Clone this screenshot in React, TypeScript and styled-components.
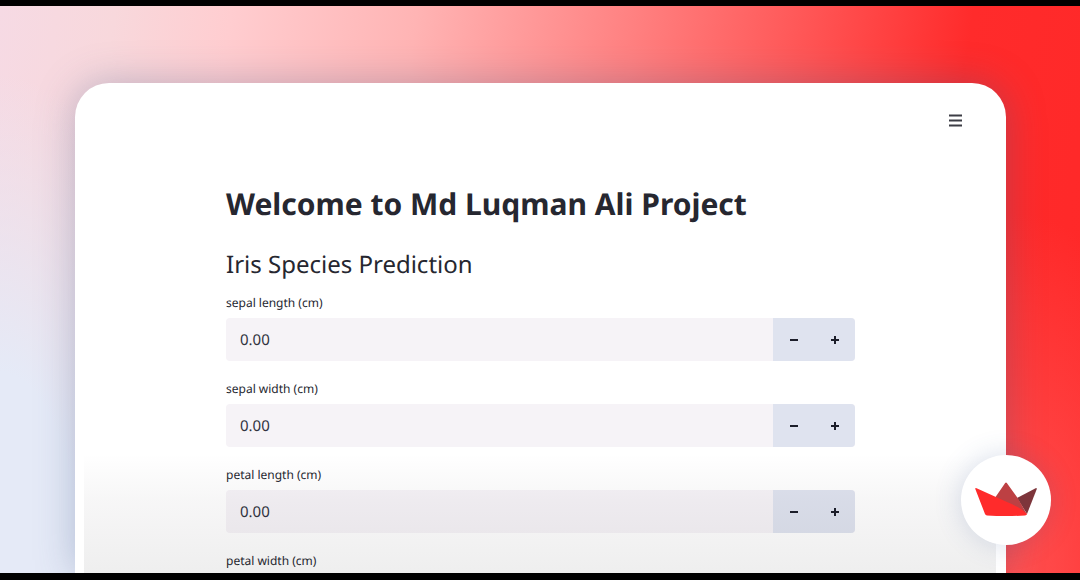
import React, { useState } from "react";
import styled, { createGlobalStyle } from "styled-components";

const GlobalStyle = createGlobalStyle`
  *, *::before, *::after { box-sizing: border-box; }
  body {
    margin: 0;
    background: #000;
    color: #262730;
    font-family: "Noto Sans", sans-serif;
    text-rendering: geometricPrecision;
  }
`;

const Stage = styled.div`
  position: relative;
  display: flex;
  height: 100vh;
  padding: 77px 74px 0 75px;
  border-top: 6px solid #000;
  border-bottom: 7px solid #000;
  overflow: hidden;
  background:
    radial-gradient(ellipse 200px 500px at 0% 100%, #e5eaf7 40%, rgba(229, 234, 247, 0) 100%),
    radial-gradient(ellipse 180px 360px at 94% 100%, rgba(255, 84, 84, 0.9), rgba(255, 84, 84, 0) 100%),
    linear-gradient(98deg, #f6dae4 0%, #f8d8dc 10%, #ffcdd0 20%, #ffb4b4 36%, #ff8080 55%, #ff5555 70%, #ff2b2b 84%, #ff2828 100%);
`;

const Card = styled.main`
  position: relative;
  flex: 1;
  min-width: 0;
  background: #fff;
  border-radius: 34px 34px 0 0;
  box-shadow: 0 0 38px rgba(70, 95, 140, 0.34);

  &::after {
    content: "";
    position: absolute;
    inset: auto 10px 0 9px;
    height: 120px;
    background: linear-gradient(rgba(20, 10, 20, 0), rgba(20, 10, 20, 0.035) 40%, rgba(20, 20, 20, 0.07));
    pointer-events: none;
  }
`;

const Toolbar = styled.header`
  display: flex;
  justify-content: flex-end;
  padding: 28px 41px 0 0;
`;

const MenuButton = styled.button`
  display: flex;
  padding: 3px;
  border: 0;
  background: none;
  color: #3c3d45;
  cursor: pointer;
`;

const Content = styled.div`
  padding: 54px 151px 0;
`;

const Title = styled.h1`
  margin: 0;
  font-size: 30px;
  font-weight: 700;
  line-height: 40px;
  white-space: nowrap;
`;

const Subtitle = styled.h2`
  margin: 25px 0 13px;
  font-size: 24px;
  font-weight: 400;
  line-height: 32px;
`;

const Form = styled.form`
  display: flex;
  flex-direction: column;
  gap: 19px;
`;

const Field = styled.div`
  display: flex;
  flex-direction: column;
  gap: 6px;
`;

const Label = styled.label`
  font-size: 12px;
  line-height: 18px;
`;

const Control = styled.div`
  display: flex;
  height: 43px;
  border-radius: 4px;
  overflow: hidden;
  background: #f6f3f7;
`;

const NumberInput = styled.input`
  flex: 1;
  min-width: 0;
  padding: 0 14px;
  border: 0;
  outline: 0;
  background: transparent;
  color: #31333f;
  font: 400 15px "Noto Sans", sans-serif;
  text-rendering: inherit;
`;

const StepButton = styled.button`
  display: flex;
  align-items: center;
  justify-content: center;
  width: 41px;
  padding: 0;
  border: 0;
  background: #dfe3ef;
  color: #1c1e2a;
  cursor: pointer;
`;

const Badge = styled.a`
  position: absolute;
  right: 29px;
  bottom: 28px;
  display: block;
  width: 90px;
  height: 90px;
  border-radius: 50%;
  background: #fff;
  box-shadow: 0 0 28px rgba(60, 90, 150, 0.2);
`;

const fields = ["sepal length (cm)", "sepal width (cm)", "petal length (cm)", "petal width (cm)"];

function NumberField({ label }: { label: string }) {
  const [value, setValue] = useState("0.00");
  const id = label.replace(/[^a-z]+/g, "-");
  const step = (delta: number) =>
    setValue((current) => ((Number(current) || 0) + delta).toFixed(2));

  return (
    <Field>
      <Label htmlFor={id}>{label}</Label>
      <Control>
        <NumberInput
          id={id}
          inputMode="decimal"
          value={value}
          onChange={(event) => setValue(event.target.value)}
        />
        <StepButton type="button" aria-label={`Decrease ${label}`} onClick={() => step(-0.01)}>
          <svg width="8" height="8" viewBox="0 0 8 8" aria-hidden="true">
            <path d="M0 4H8" stroke="currentColor" strokeWidth="2" />
          </svg>
        </StepButton>
        <StepButton type="button" aria-label={`Increase ${label}`} onClick={() => step(0.01)}>
          <svg width="8" height="8" viewBox="0 0 8 8" aria-hidden="true">
            <path d="M0 4H8M4 0V8" stroke="currentColor" strokeWidth="2" />
          </svg>
        </StepButton>
      </Control>
    </Field>
  );
}

export default function App() {
  return (
    <>
      <GlobalStyle />
      <Stage>
        <Card>
          <Toolbar>
            <MenuButton type="button" aria-label="Menu">
              <svg width="13" height="13" viewBox="0 0 13 13" aria-hidden="true">
                <path d="M0 1.5H13M0 6.5H13M0 11.5H13" stroke="currentColor" strokeWidth="1.8" />
              </svg>
            </MenuButton>
          </Toolbar>
          <Content>
            <Title>Welcome to Md Luqman Ali Project</Title>
            <Subtitle>Iris Species Prediction</Subtitle>
            <Form>
              {fields.map((label) => (
                <NumberField key={label} label={label} />
              ))}
            </Form>
          </Content>
        </Card>
        <Badge href="#" aria-label="Streamlit">
          <svg width="90" height="90" viewBox="0 0 90 90" aria-hidden="true">
            <path d="M74.6 33.2Q76.2 32.6 75.6 34.4L66 59L56 43Z" fill="#7d353b" />
            <path d="M44 28.2Q45 26.8 46 28.2L57 43.5L66 59.5L33.5 43.5Z" fill="#bd4043" />
            <path d="M14.4 34.2Q13.8 32.6 15.6 33.2L46 47Q59 52 66 59Q65.6 60.4 64 60.5Q45 61.6 26 60.5Q24.6 60.4 24 59Z" fill="#ff2b2b" />
          </svg>
        </Badge>
      </Stage>
    </>
  );
}
